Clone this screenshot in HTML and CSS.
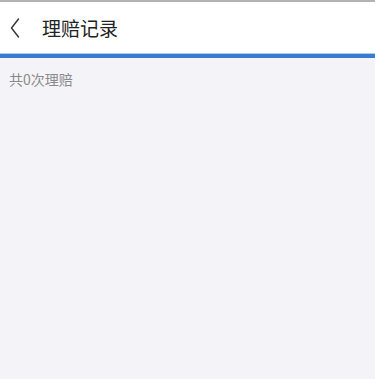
FILE: index.html
```html
<!DOCTYPE html>
<html lang="zh-CN">
<head>
<meta charset="utf-8">
<title>理赔记录</title>
<link rel="stylesheet" href="styles.css">
</head>
<body>
<div class="page">
  <div class="status"></div>
  <header class="navbar">
    <span class="back">
      <svg width="10" height="20" viewBox="0 0 10 20"><path d="M8.5 1 L1.5 10 L8.5 19" fill="none" stroke="#333" stroke-width="1.4" stroke-linecap="round" stroke-linejoin="round"/></svg>
    </span>
    <h1 class="title">理赔记录</h1>
  </header>
  <div class="accent"></div>
  <p class="count">共0次理赔</p>
</div>
</body>
</html>
```
FILE: styles.css
```css
html, body {
  margin: 0;
  padding: 0;
  height: 100%;
}
body {
  background: #f4f4f8;
  font-family: "Noto Sans CJK SC", "Noto Sans", sans-serif;
}
.page {
  min-height: 100%;
}
.status {
  height: 2px;
  background: #b3b3b3;
}
.navbar {
  height: 51px;
  background: #ffffff;
  display: flex;
  align-items: center;
  padding-left: 10px;
  box-sizing: border-box;
}
.back {
  display: flex;
  width: 10px;
  height: 20px;
  margin-top: 1px;
}
.title {
  margin: 0 0 0 22px;
  font-size: 19px;
  font-weight: 400;
  color: #222222;
  line-height: 1;
}
.accent {
  height: 4px;
  background: #3a7bd0;
  border-top: 1px solid #a9cdf0;
}
.count {
  margin: 0;
  padding: 11px 0 0 9px;
  font-size: 14px;
  color: #8a8a8a;
  line-height: 20px;
}
```
